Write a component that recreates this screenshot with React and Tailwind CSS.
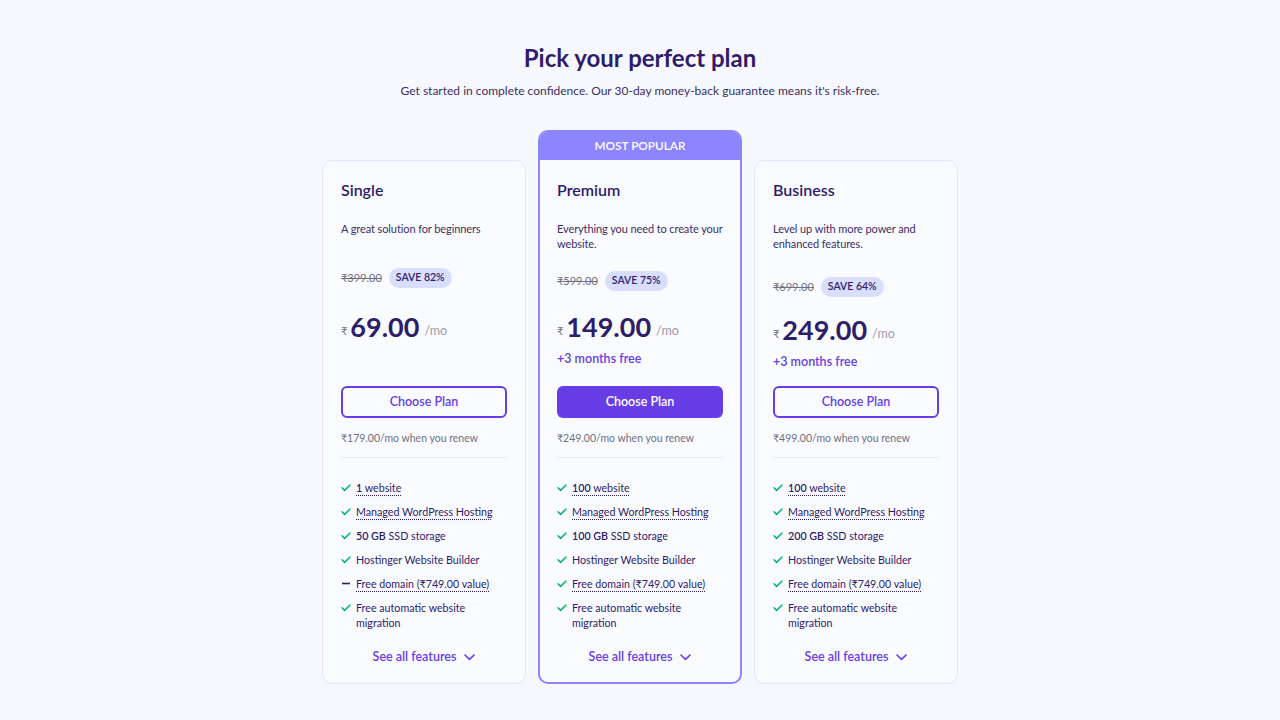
import React from 'react';

const plans = [
  {
    name: 'Single',
    desc: 'A great solution for beginners',
    old: '₹399.00',
    save: 'SAVE 82%',
    price: '69.00',
    renew: '₹179.00/mo when you renew',
    free: false,
    popular: false,
    oldMt: 'mt-[17px]',
    priceMt: 'mt-[21px]',
    sites: '1',
    storage: '50 GB',
    domain: false,
  },
  {
    name: 'Premium',
    desc: 'Everything you need to create your website.',
    old: '₹599.00',
    save: 'SAVE 75%',
    price: '149.00',
    renew: '₹249.00/mo when you renew',
    free: true,
    popular: true,
    oldMt: 'mt-[20px]',
    priceMt: 'mt-[18px]',
    sites: '100',
    storage: '100 GB',
    domain: true,
  },
  {
    name: 'Business',
    desc: 'Level up with more power and enhanced features.',
    old: '₹699.00',
    save: 'SAVE 64%',
    price: '249.00',
    renew: '₹499.00/mo when you renew',
    free: true,
    popular: false,
    oldMt: 'mt-[26px]',
    priceMt: 'mt-[15px]',
    sites: '100',
    storage: '200 GB',
    domain: true,
  },
];

const Check = () => (
  <svg width="10" height="15" viewBox="0 0 10 15" className="shrink-0">
    <path d="M1 7.8l2.6 2.6L9 5" fill="none" stroke="#00b67a" strokeWidth="1.5" strokeLinecap="round" strokeLinejoin="round" />
  </svg>
);

const Dash = () => (
  <svg width="10" height="15" viewBox="0 0 10 15" className="shrink-0">
    <path d="M1 7.5h8" fill="none" stroke="#2f1c6a" strokeWidth="1.6" />
  </svg>
);

const Feature = ({ icon, children }) => (
  <li className="flex items-start gap-[5px]">
    {icon}
    <span>{children}</span>
  </li>
);

const dotted = 'underline decoration-dotted decoration-[#2f1c6a] underline-offset-[3px]';

const PlanCard = ({ plan }) => {
  const p = plan;
  return (
    <div
      className={
        p.popular
          ? 'w-[204px] rounded-[10px] border-2 border-[#8c85ff] bg-[#fafbff] overflow-hidden'
          : 'w-[204px] rounded-[10px] border border-[#e7e6fa] bg-[#fafbff]'
      }
    >
      {p.popular && (
        <div className="h-[28px] bg-[#8c85ff] flex items-center justify-center text-white text-[11.8px] font-semibold">
          MOST POPULAR
        </div>
      )}
      <div className={p.popular ? 'px-[17px] pt-[19px] pb-[15px]' : 'px-[18px] pt-[18px] pb-[16px]'}>
        <div className="h-[207px]">
          <h3 className="text-[16px] leading-[22px] font-semibold text-[#2f1c6a]">{p.name}</h3>
          <p className="mt-[20px] h-[30px] text-[11px] leading-[15px] tracking-[-0.1px] text-[#3a2f66]">{p.desc}</p>
          <div className={`${p.oldMt} h-[20px] flex items-center gap-[7px]`}>
            <span className="text-[11px] text-[#6d7081] line-through">{p.old}</span>
            <span className="h-[20px] px-[7px] rounded-full bg-[#d9defd] text-[#2f1c6a] text-[10.5px] font-semibold flex items-center">
              {p.save}
            </span>
          </div>
          <div className={`${p.priceMt} h-[36px] flex items-center`}>
            <span className="text-[11px] text-[#6d7081] mr-[3px] mt-[8px]">₹</span>
            <span className="text-[27px] leading-[36px] font-bold text-[#2f1c6a]">{p.price}</span>
            <span className="text-[12.5px] text-[#9a9cab] ml-[5px] mt-[8px]">/mo</span>
          </div>
          {p.free && (
            <div className="mt-[4px] text-[12.5px] leading-[20px] font-semibold text-[#673de6]">+3 months free</div>
          )}
        </div>
        <button
          className={
            p.popular
              ? 'w-full h-[32px] rounded-[6px] bg-[#673de6] text-white text-[12.5px] font-semibold'
              : 'w-full h-[32px] rounded-[6px] border-2 border-[#673de6] text-[#673de6] text-[12.5px] font-semibold'
          }
        >
          Choose Plan
        </button>
        <p className="mt-[12px] text-[10.5px] leading-[16px] text-[#6d7081]">{p.renew}</p>
        <div className="mt-[11px] h-px bg-[#e9e8f4]" />
        <ul className="mt-[22px] flex flex-col gap-[9px] text-[10.7px] leading-[15px] text-[#2f1c6a]">
          <Feature icon={<Check />}>
            <span className={dotted}>
              <b className="font-semibold">{p.sites}</b> website
            </span>
          </Feature>
          <Feature icon={<Check />}>
            <span className={dotted}>Managed WordPress Hosting</span>
          </Feature>
          <Feature icon={<Check />}>
            <b className="font-semibold">{p.storage}</b> SSD storage
          </Feature>
          <Feature icon={<Check />}>Hostinger Website Builder</Feature>
          <Feature icon={p.domain ? <Check /> : <Dash />}>
            <span className={dotted}>Free domain (₹749.00 value)</span>
          </Feature>
          <Feature icon={<Check />}>Free automatic website migration</Feature>
        </ul>
        <div className="mt-[17px] h-[20px] flex items-center justify-center gap-[8px] text-[12.5px] font-semibold text-[#673de6]">
          <span>See all features</span>
          <svg width="11" height="7" viewBox="0 0 11 7">
            <path d="M1 1l4.5 4.5L10 1" fill="none" stroke="#673de6" strokeWidth="1.6" strokeLinecap="round" strokeLinejoin="round" />
          </svg>
        </div>
      </div>
    </div>
  );
};

const App = () => {
  return (
    <div className="min-h-screen bg-[#f7f8fe] font-['Lato','Noto_Sans',sans-serif] pt-[40px]">
      <h1 className="text-center text-[24px] leading-[36px] font-bold text-[#2f1c6a]">Pick your perfect plan</h1>
      <p className="mt-[5px] text-center text-[12px] leading-[20px] text-[#3a2f66]">
        Get started in complete confidence. Our 30-day money-back guarantee means it's risk-free.
      </p>
      <div className="mt-[29px] flex justify-center items-end gap-[12px]">
        {plans.map((p) => (
          <PlanCard key={p.name} plan={p} />
        ))}
      </div>
    </div>
  );
};

export default App;
